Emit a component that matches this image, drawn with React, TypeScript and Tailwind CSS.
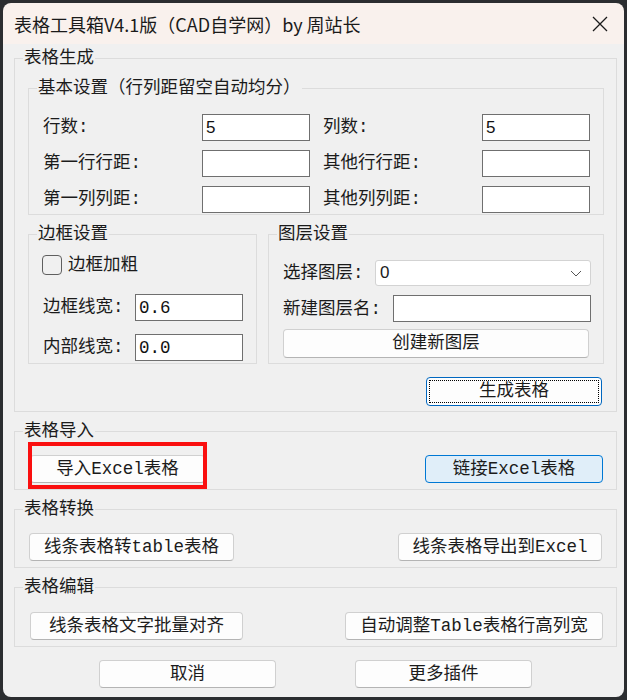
import React from 'react';

const base = 'h-[28px] rounded-[4px] border text-[#1b1b1b] flex items-center justify-center leading-none';
const btn = `${base} border-[#d0d0d0] border-b-[#b4b4b4] bg-[#fdfdfd]`;
const field = 'h-[27px] border border-[#6f6f6f] bg-white px-[3px] outline-none text-[#111]';

function Group({ title, className = '', children }: { title: string; className?: string; children: React.ReactNode }) {
  return (
    <fieldset className={`border border-[#dcdcdc] min-w-0 ${className}`}>
      <legend className="ml-[8px] px-[1px] leading-[18px] text-[#1b1b1b]">{title}</legend>
      {children}
    </fieldset>
  );
}

function Row({ left, right, lv, rv }: { left: string; right: string; lv?: string; rv?: string }) {
  return (
    <div className="flex items-center h-[27px]">
      <span className="w-[159px]">{left}</span>
      <input readOnly value={lv ?? ''} className={`${field} w-[108px] font-['Liberation_Sans',sans-serif] text-[17px]`} />
      <span className="w-[159px] ml-[13px]">{right}</span>
      <input readOnly value={rv ?? ''} className={`${field} w-[108px] font-['Liberation_Sans',sans-serif] text-[17px]`} />
    </div>
  );
}

export default function App() {
  return (
    <div className="min-h-screen bg-[#2b2d30] pt-[3px] pl-[3px]">
      <div className="w-[621px] h-[694px] rounded-[8px] overflow-hidden flex flex-col">
        {/* title bar */}
        <div className="h-[41px] bg-[#f9f1ed] flex items-center justify-between pl-[11px] pr-[16px]">
          <span className="font-['Noto_Sans_CJK_SC',sans-serif] text-[18px] text-[#1a1a1a] leading-none">
            表格工具箱V4.1版（CAD自学网）by 周站长
          </span>
          <svg width="16" height="16" viewBox="0 0 16 16">
            <path d="M1 1L15 15M15 1L1 15" stroke="#1a1a1a" strokeWidth="1.3" fill="none" />
          </svg>
        </div>

        <div className="flex-1 bg-[#f0f0f0] pt-[5px] pl-[11px] text-[17.5px] text-[#1b1b1b] font-['Liberation_Mono','Noto_Sans_CJK_SC',monospace]">
          <Group title="表格生成" className="w-[603px]">
            <div className="pt-[12px] pl-[13px] pb-[5px]">
              <Group title="基本设置（行列距留空自动均分）" className="w-[576px]">
                <div className="pt-[17px] pl-[14px] pb-[1px] flex flex-col gap-[9px]">
                  <Row left="行数:" right="列数:" lv="5" rv="5" />
                  <Row left="第一行行距:" right="其他行行距:" />
                  <Row left="第一列列距:" right="其他列列距:" />
                </div>
              </Group>

              <div className="flex gap-[11px] mt-[10px]">
                <Group title="边框设置" className="w-[229px]">
                  <div className="pt-[12px] pl-[13px] pb-[2px]">
                    <label className="flex items-center gap-[6px] h-[20px]">
                      <span className="w-[20px] h-[20px] rounded-[4px] border border-[#5f5f5f]" />
                      <span>边框加粗</span>
                    </label>
                    <div className="flex items-center mt-[19px] pl-[1px]">
                      <span className="w-[92px]">边框线宽:</span>
                      <input readOnly value="0.6" className={`${field} w-[108px]`} />
                    </div>
                    <div className="flex items-center mt-[13px] pl-[1px]">
                      <span className="w-[92px]">内部线宽:</span>
                      <input readOnly value="0.0" className={`${field} w-[108px]`} />
                    </div>
                  </div>
                </Group>

                <Group title="图层设置" className="w-[336px]">
                  <div className="pt-[17px] pl-[14px] pb-[5px]">
                    <div className="flex items-center">
                      <span className="w-[92px]">选择图层:</span>
                      <div className="w-[216px] h-[26px] rounded-[3px] border border-[#d3d3d3] bg-white flex items-center justify-between pl-[4px] pr-[8px] font-['Liberation_Sans',sans-serif] text-[17px]">
                        <span>0</span>
                        <svg width="12" height="7" viewBox="0 0 12 7">
                          <path d="M1 1L6 6L11 1" stroke="#555" strokeWidth="1" fill="none" />
                        </svg>
                      </div>
                    </div>
                    <div className="flex items-center mt-[9px]">
                      <span className="w-[110px]">新建图层名:</span>
                      <input readOnly value="" className={`${field} w-[198px]`} />
                    </div>
                    <button className={`${btn} w-[306px] h-[29px] mt-[7px]`}>创建新图层</button>
                  </div>
                </Group>
              </div>

              <div className="flex mt-[13px] pl-[398px]">
                <button className="w-[176px] h-[29px] rounded-[4px] border border-[#0067c0] bg-[#fdfdfd] p-[2px]">
                  <span className="w-full h-full border border-dotted border-black flex items-center justify-center leading-none">
                    生成表格
                  </span>
                </button>
              </div>
            </div>
          </Group>

          <Group title="表格导入" className="w-[603px] mt-[10px]">
            <div className="pt-[15px] pb-[6px] pl-[15px] pr-[13px] flex justify-between">
              <div className="relative">
                <button className={`${btn} w-[175px]`}>导入Excel表格</button>
                <span className="absolute left-[-2px] top-[-13px] w-[179px] h-[47px] border-[4px] border-[#fa0f0f]" />
              </div>
              <button className={`${base} w-[178px] bg-[#e0eef9] border-[#0078d4]`}>链接Excel表格</button>
            </div>
          </Group>

          <Group title="表格转换" className="w-[603px] mt-[10px]">
            <div className="pt-[15px] pb-[6px] pl-[14px] pr-[14px] flex justify-between">
              <button className={`${btn} w-[205px]`}>线条表格转table表格</button>
              <button className={`${btn} w-[204px]`}>线条表格导出到Excel</button>
            </div>
          </Group>

          <Group title="表格编辑" className="w-[603px] mt-[10px]">
            <div className="pt-[16px] pb-[6px] pl-[15px] pr-[13px] flex justify-between">
              <button className={`${btn} w-[213px] h-[27px]`}>线条表格文字批量对齐</button>
              <button className={`${btn} w-[258px] h-[27px]`}>自动调整Table表格行高列宽</button>
            </div>
          </Group>

          <div className="flex gap-[79px] pl-[85px] mt-[13px]">
            <button className={`${btn} w-[177px]`}>取消</button>
            <button className={`${btn} w-[177px]`}>更多插件</button>
          </div>
        </div>
      </div>
    </div>
  );
}
